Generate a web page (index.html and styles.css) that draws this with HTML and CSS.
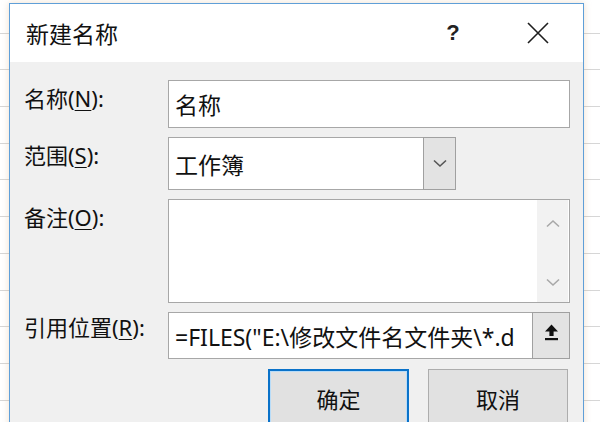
FILE: index.html
```html
<!DOCTYPE html>
<html lang="zh-CN">
<head>
<meta charset="utf-8">
<title>新建名称</title>
<link rel="stylesheet" href="styles.css">
</head>
<body>
<div class="sheet">
  <div class="dialog">
    <div class="titlebar">
      <span class="title">新建名称</span>
      <span class="help">?</span>
      <span class="close">
        <svg width="22" height="22" viewBox="0 0 22 22"><path d="M1 1 L21 21 M21 1 L1 21" stroke="#1e1e1e" stroke-width="1.6" fill="none"/></svg>
      </span>
    </div>
    <div class="body">
      <div class="form">
        <div class="lbl">名称(<u>N</u>):</div>
        <div class="box input">名称</div>

        <div class="lbl">范围(<u>S</u>):</div>
        <div class="combo">
          <div class="box combo-text">工作簿</div>
          <div class="combo-btn">
            <svg width="14" height="9" viewBox="0 0 14 9"><path d="M1 1.5 L7 7 L13 1.5" stroke="#555" stroke-width="1.6" fill="none"/></svg>
          </div>
        </div>

        <div class="lbl">备注(<u>O</u>):</div>
        <div class="box textarea">
          <div class="ta-text"></div>
          <div class="scroll">
            <svg width="14" height="9" viewBox="0 0 14 9"><path d="M1 7.5 L7 2 L13 7.5" stroke="#a8a8a8" stroke-width="1.6" fill="none"/></svg>
            <svg width="14" height="9" viewBox="0 0 14 9"><path d="M1 1.5 L7 7 L13 1.5" stroke="#a8a8a8" stroke-width="1.6" fill="none"/></svg>
          </div>
        </div>

        <div class="lbl lbl-ref">引用位置(<u>R</u>):</div>
        <div class="ref">
          <div class="box ref-text">=FILES("E:\修改文件名文件夹\*.d</div>
          <div class="ref-btn">
            <svg width="15" height="17" viewBox="0 0 15 17"><path d="M7.5 0.5 L14 7.5 L9.6 7.5 L9.6 12 L5.4 12 L5.4 7.5 L1 7.5 Z" fill="#111"/><rect x="1" y="14" width="13" height="2.2" fill="#111"/></svg>
          </div>
        </div>
      </div>
      <div class="buttons">
        <div class="btn btn-default">确定</div>
        <div class="btn">取消</div>
      </div>
    </div>
  </div>
</div>
</body>
</html>
```
FILE: styles.css
```css
html, body {
  margin: 0;
  padding: 0;
}
body {
  width: 600px;
  height: 422px;
  overflow: hidden;
  background-color: #ffffff;
  background-image: repeating-linear-gradient(to bottom, transparent 0, transparent 35.7px, #d6d6d6 35.7px, #d6d6d6 36.7px);
  background-position: 0 -3px;
  font-family: "Noto Sans", "Noto Sans CJK SC", sans-serif;
  color: #111111;
}
.sheet {
  padding: 3px 0 0 9px;
}
.dialog {
  width: 573px;
  height: 440px;
  border: 1px solid #5f9fd8;
  background: #f0f0f0;
  box-shadow: 0 0 7px rgba(210, 160, 110, 0.35);
  display: flex;
  flex-direction: column;
}
.titlebar {
  height: 58px;
  background: #ffffff;
  display: flex;
  align-items: center;
  flex-shrink: 0;
}
.title {
  flex: 1;
  padding-left: 16px;
  font-size: 23px;
  color: #111111;
}
.help {
  width: 46px;
  text-align: center;
  font-size: 22px;
  font-weight: bold;
  color: #222;
  font-family: "Liberation Sans", sans-serif;
}
.close {
  width: 46px;
  margin-left: 39px;
  margin-right: 22px;
  display: flex;
  justify-content: center;
}
.body {
  padding: 18px 13px 0 14px;
}
.form {
  display: grid;
  grid-template-columns: 144px 402px;
  grid-template-rows: 48px 53px 104px 47px;
  row-gap: 9px;
}
.lbl {
  font-size: 22px;
  line-height: 30px;
  padding-top: 3px;
  color: #111111;
  white-space: nowrap;
}
.lbl-ref {
  padding-top: 0;
}
.lbl u {
  text-underline-offset: 3px;
  text-decoration-thickness: 1px;
}
.box {
  background: #ffffff;
  border: 1px solid #a7a7a7;
  box-sizing: border-box;
}
.input, .combo-text, .ref-text {
  display: flex;
  align-items: center;
  padding-left: 6px;
  font-size: 23px;
  white-space: nowrap;
  overflow: hidden;
}
.combo {
  display: flex;
  width: 288px;
}
.combo-text {
  flex: 1;
  border-right: none;
}
.combo-btn {
  width: 33px;
  background: #e3e3e3;
  border: 1px solid #a0a0a0;
  box-sizing: border-box;
  display: flex;
  align-items: center;
  justify-content: center;
}
.textarea {
  display: flex;
}
.ta-text {
  flex: 1;
}
.scroll {
  width: 31px;
  margin-right: 1px;
  background: #f2f2f2;
  display: flex;
  flex-direction: column;
  align-items: center;
  justify-content: space-between;
  padding: 19px 0 15px;
}
.ref {
  display: flex;
}
.ref-text {
  flex: 1;
  border-right: none;
}
.ref-btn {
  width: 38px;
  background: #e3e3e3;
  border: 1px solid #a0a0a0;
  box-sizing: border-box;
  display: flex;
  align-items: center;
  justify-content: center;
  padding-bottom: 6px;
}
.buttons {
  display: flex;
  justify-content: flex-end;
  gap: 19px;
  margin-top: 10px;
  padding-right: 2px;
}
.btn {
  width: 140px;
  height: 58px;
  box-sizing: border-box;
  background: #e1e1e1;
  border: 1px solid #adadad;
  display: flex;
  align-items: center;
  justify-content: center;
  font-size: 22px;
  color: #111111;
}
.btn-default {
  width: 141px;
  border: 2px solid #0a72c9;
  box-shadow: inset 0 0 0 1px #b8dcf8;
}
```
